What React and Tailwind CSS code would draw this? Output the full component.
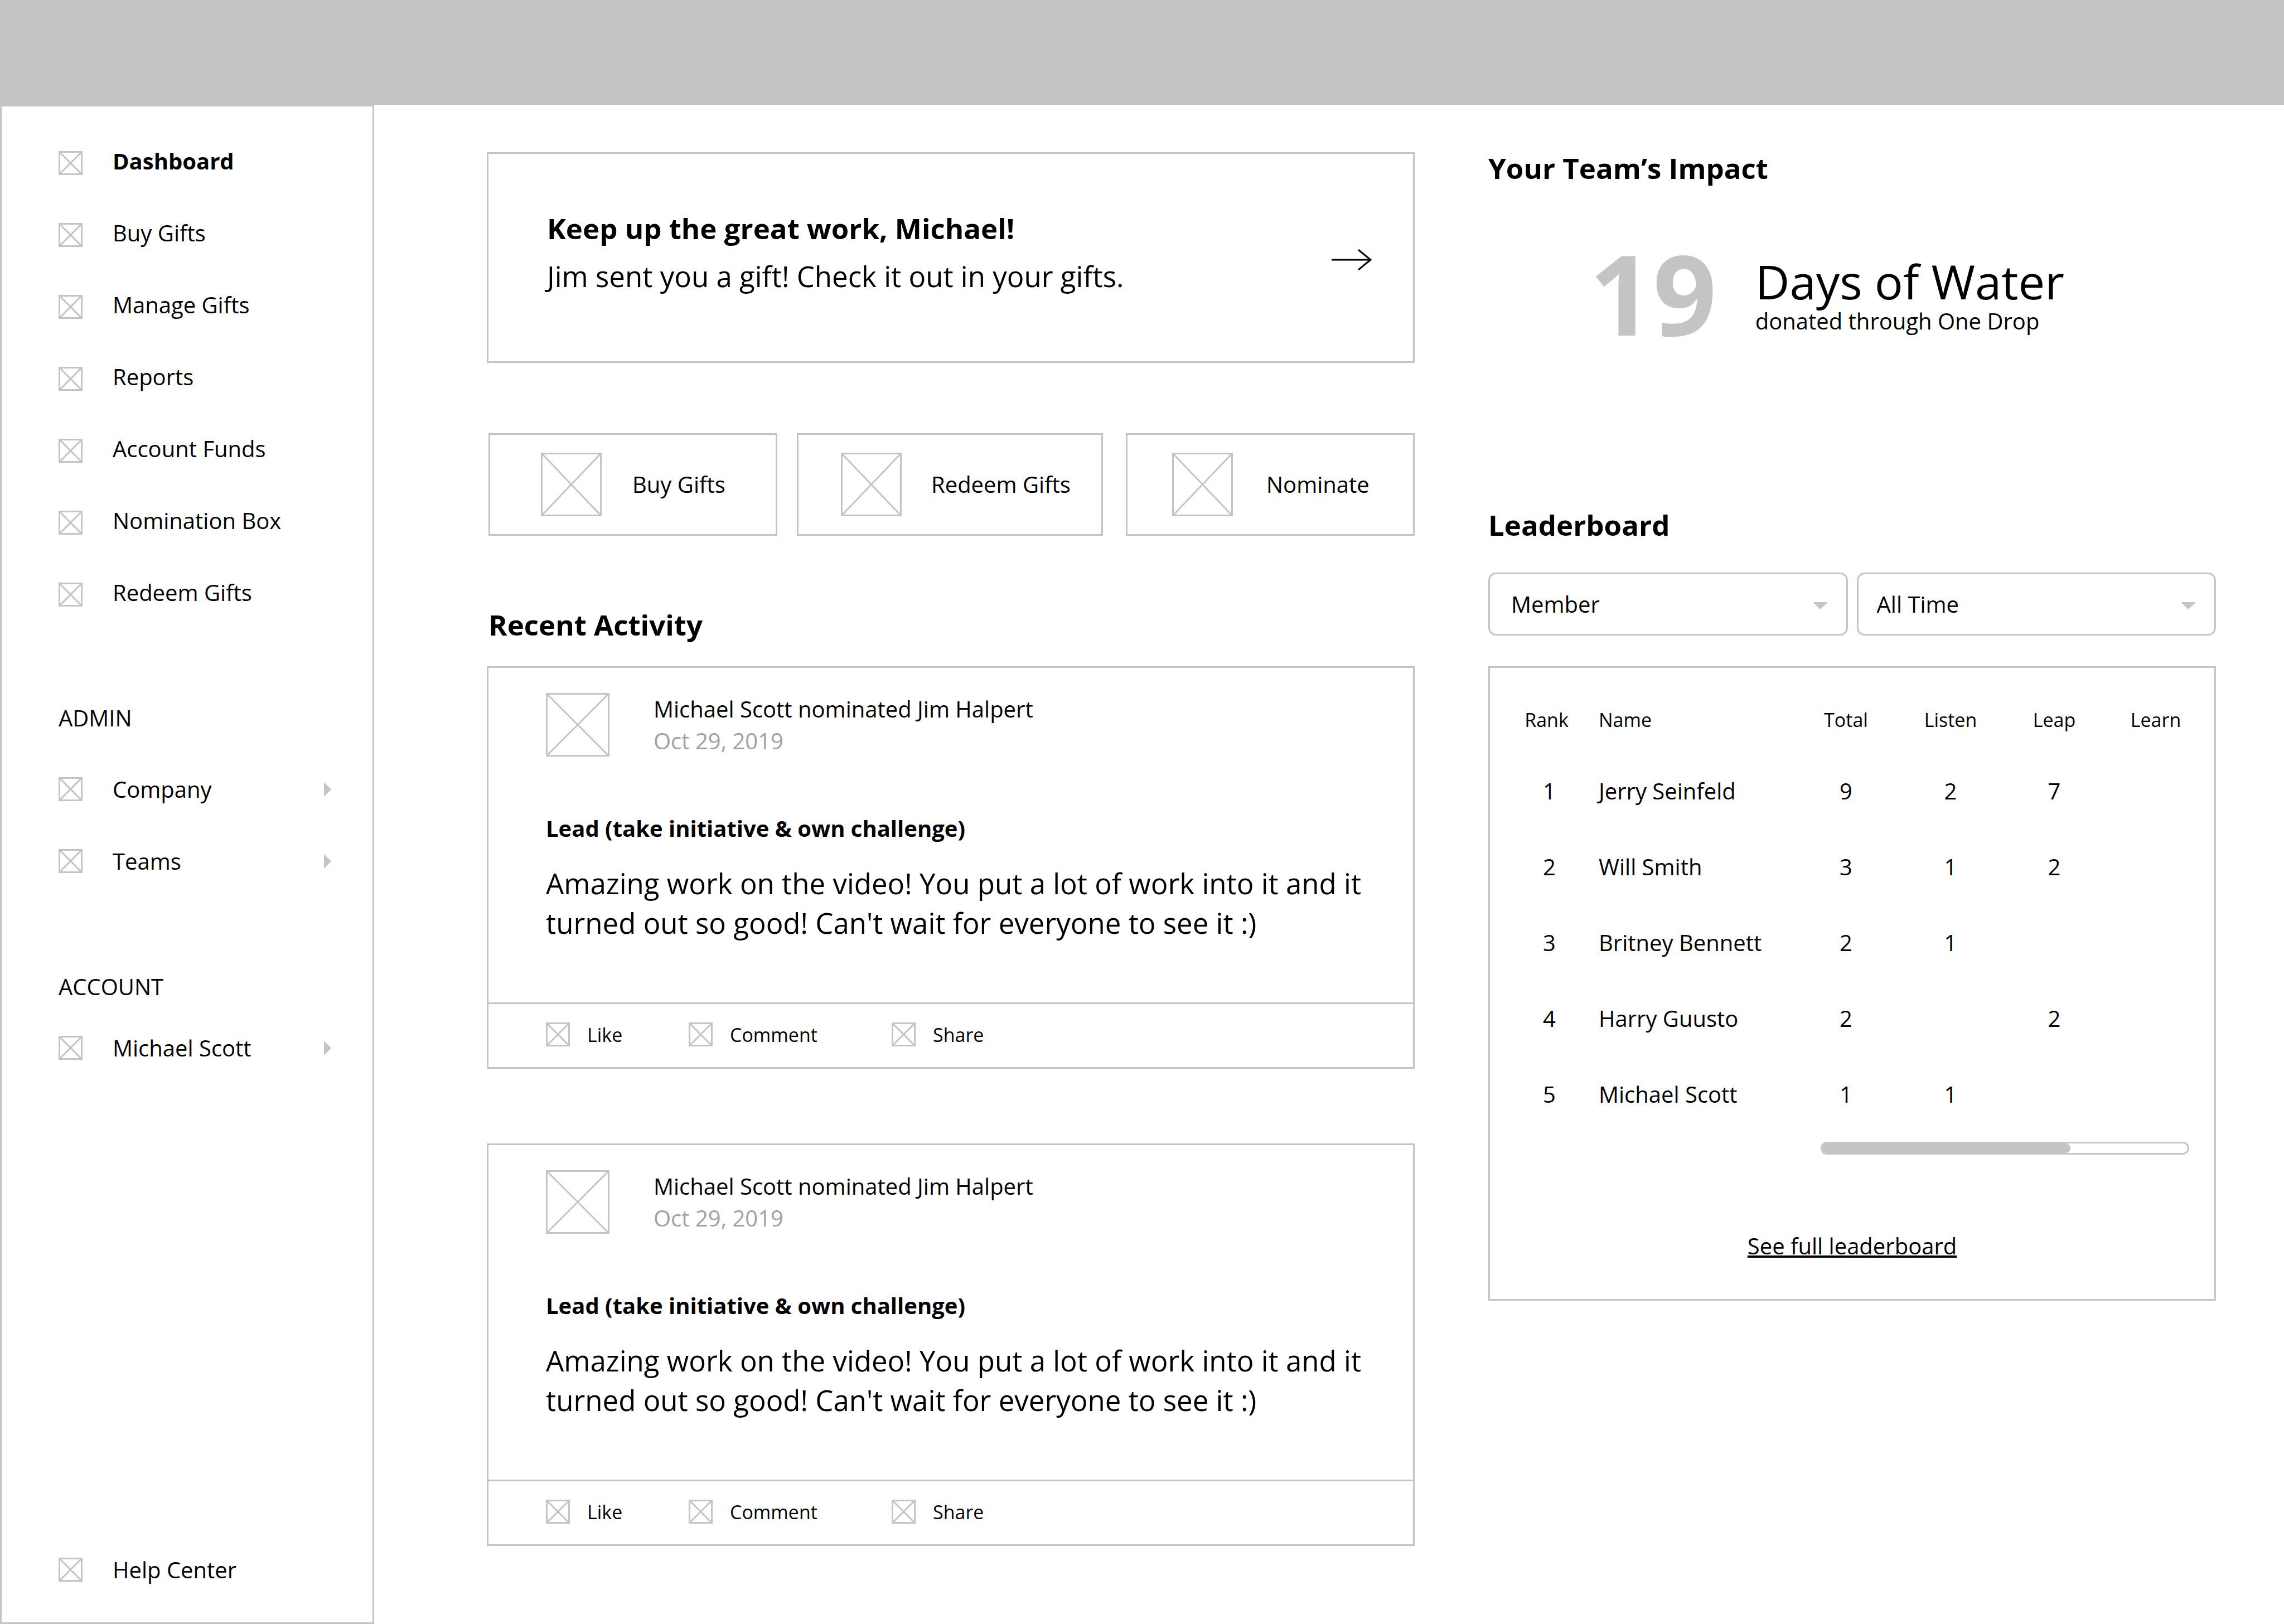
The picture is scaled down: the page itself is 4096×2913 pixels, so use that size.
const LINE = '#c4c4c4';

function Placeholder({ className, w, h }) {
  return (
    <svg className={className} viewBox={`0 0 ${w} ${h}`} fill="none" stroke={LINE} strokeWidth="3" aria-hidden="true">
      <rect x="1.5" y="1.5" width={w - 3} height={h - 3} />
      <path d={`M1 1L${w - 1} ${h - 1}M${w - 1} 1L1 ${h - 1}`} strokeWidth="3" />
    </svg>
  );
}

function NavItem({ label, bold, arrow, iconClass = '' }) {
  return (
    <li>
      <a href="#" className="flex h-[129px] items-center gap-[54px]">
        <span className={iconClass}>
          <Placeholder className="h-[43px] w-[43px]" w={43} h={43} />
        </span>
        <span className={bold ? 'font-bold' : ''}>{label}</span>
        {arrow && (
          <svg className="ml-auto h-[26px] w-[13px]" viewBox="0 0 13 26" fill={LINE} aria-hidden="true">
            <path d="M0 0L13 13L0 26Z" />
          </svg>
        )}
      </a>
    </li>
  );
}

const navItems = ['Dashboard', 'Buy Gifts', 'Manage Gifts', 'Reports', 'Account Funds', 'Nomination Box', 'Redeem Gifts'];

function Sidebar() {
  return (
    <aside className="flex w-[671px] shrink-0 flex-col border-3 border-[#c4c4c4] pt-[33px] pr-[74px] pb-[30px] pl-[102px]">
      <nav aria-label="Main">
        <ul>
          {navItems.map((label, i) => (
            <NavItem key={label} label={label} bold={i === 0} iconClass="mt-2" />
          ))}
        </ul>
        <h2 className="mt-[134px]">ADMIN</h2>
        <ul className="mt-9">
          <NavItem label="Company" arrow />
          <NavItem label="Teams" arrow />
        </ul>
        <h2 className="mt-[134px]">ACCOUNT</h2>
        <ul className="mt-[18px]">
          <NavItem label="Michael Scott" arrow />
        </ul>
      </nav>
      <ul className="mt-auto">
        <NavItem label="Help Center" />
      </ul>
    </aside>
  );
}

function Hero() {
  return (
    <a href="#" className="flex items-center justify-between border-3 border-[#c4c4c4] pt-2 pr-[74px] pl-[105px] text-[51px] leading-[71px]">
      <div className="pt-[90px] pb-[117px]">
        <p className="font-bold">Keep up the great work, Michael!</p>
        <p className="mt-[15px]">Jim sent you a gift! Check it out in your gifts.</p>
      </div>
      <svg className="h-[38px] w-[72px]" viewBox="0 0 72 38" fill="none" stroke="black" strokeWidth="3" aria-hidden="true">
        <path d="M0 19H70M48 1L70 19L48 37" />
      </svg>
    </a>
  );
}

function QuickAction({ label, className }) {
  return (
    <button type="button" className={`flex h-[184px] items-center border-3 border-[#c4c4c4] ${className}`}>
      <Placeholder className="h-[114px] w-[109px]" w={109} h={114} />
      <span>{label}</span>
    </button>
  );
}

function Activity() {
  return (
    <article className="border-3 border-[#c4c4c4]">
      <div className="px-[103px] pt-[45px] pb-[107px]">
        <header className="flex gap-[79px]">
          <Placeholder className="h-[114px] w-[114px]" w={114} h={114} />
          <div className="leading-[57px]">
            <p>Michael Scott nominated Jim Halpert</p>
            <p className="text-[#a1a1a1]">Oct 29, 2019</p>
          </div>
        </header>
        <h3 className="mt-[102px] font-bold">Lead (take initiative &amp; own challenge)</h3>
        <p className="mt-9 -mr-9 text-[51px] leading-[71px]">
          Amazing work on the video! You put a lot of work into it and it turned out so good! Can't wait for everyone to see it :)
        </p>
      </div>
      <footer className="grid h-[116px] grid-cols-[256px_364px_auto] items-center justify-start border-t-3 border-[#c4c4c4] px-[103px] pb-1 text-[34px] leading-[46px]">
        {['Like', 'Comment', 'Share'].map((label) => (
          <button key={label} type="button" className="flex items-center gap-[31px]">
            <Placeholder className="h-[43px] w-[43px]" w={43} h={43} />
            <span>{label}</span>
          </button>
        ))}
      </footer>
    </article>
  );
}

function Select({ label, value, className }) {
  return (
    <div className="relative flex-1">
      <select
        aria-label={label}
        defaultValue={value}
        className={`h-[113px] w-full appearance-none rounded-[14px] border-3 border-[#c4c4c4] bg-white pr-20 ${className}`}
      >
        <option>{value}</option>
      </select>
      <svg className="pointer-events-none absolute top-[53px] right-9 h-[13px] w-[27px]" viewBox="0 0 27 13" fill={LINE} aria-hidden="true">
        <path d="M0 0H27L13.5 13Z" />
      </svg>
    </div>
  );
}

const rows = [
  [1, 'Jerry Seinfeld', 9, 2, 7],
  [2, 'Will Smith', 3, 1, 2],
  [3, 'Britney Bennett', 2, 1, ''],
  [4, 'Harry Guusto', 2, '', 2],
  [5, 'Michael Scott', 1, 1, ''],
];

function Leaderboard() {
  return (
    <section>
      <h2 className="mt-[245px] text-[51px] leading-[71px] font-bold">Leaderboard</h2>
      <div className="mt-[50px] flex gap-4">
        <Select label="Group by" value="Member" className="pl-[38px]" />
        <Select label="Period" value="All Time" className="pl-[33px]" />
      </div>
      <div className="mt-[55px] flex flex-col border-3 border-[#c4c4c4] pt-8 pb-[68px]">
        <div className="pr-[14px]">
          <table className="w-full table-fixed text-center">
            <thead>
              <tr className="h-[121px] text-[34px] leading-[46px]">
                <th className="w-[195px] pl-2 font-normal">Rank</th>
                <th className="text-left font-normal">Name</th>
                <th className="w-[185px] font-normal">Total</th>
                <th className="w-[190px] font-normal">Listen</th>
                <th className="w-[182px] font-normal">Leap</th>
                <th className="w-[182px] font-normal">Learn</th>
              </tr>
            </thead>
            <tbody>
              {rows.map(([rank, name, total, listen, leap]) => (
                <tr key={rank} className="h-[136px]">
                  <td className="pl-[18px]">{rank}</td>
                  <td className="text-left">{name}</td>
                  <td>{total}</td>
                  <td>{listen}</td>
                  <td>{leap}</td>
                  <td />
                </tr>
              ))}
            </tbody>
          </table>
        </div>
        <div className="mt-[17px] mr-[45px] ml-[593px] h-[23px] overflow-hidden rounded-full border-3 border-[#c4c4c4]">
          <div className="h-full w-[68%] rounded-r-full bg-[#c4c4c4]" />
        </div>
        <a href="#" className="mt-[137px] self-center underline">See full leaderboard</a>
      </div>
    </section>
  );
}

export default function App() {
  return (
    <div className="flex min-h-screen flex-col bg-white font-['Open_Sans',sans-serif] text-[40px] leading-[54px] text-black">
      <header className="h-[188px] shrink-0 bg-[#c4c4c4]" />
      <div className="flex flex-1">
        <Sidebar />
        <main className="grid flex-1 grid-cols-[1664fr_1305fr] items-start gap-[132px] pr-[122px] pl-[202px]">
          <div className="min-w-0 pt-[85px]">
            <Hero />
            <div className="mt-[126px] grid grid-cols-[553fr_590fr_518fr] pl-[3px]">
              <QuickAction label="Buy Gifts" className="mr-[35px] gap-[55px] pl-[91px]" />
              <QuickAction label="Redeem Gifts" className="mr-[41px] gap-[53px] pl-[76px]" />
              <QuickAction label="Nominate" className="gap-[60px] pl-[80px]" />
            </div>
            <h2 className="mt-[124px] pl-[3px] text-[51px] leading-[71px] font-bold">Recent Activity</h2>
            <div className="mt-[39px] flex flex-col gap-[134px]">
              <Activity />
              <Activity />
            </div>
          </div>
          <div className="min-w-0 pt-[78px]">
            <section>
              <h2 className="text-[51px] leading-[71px] font-bold">Your Team’s Impact</h2>
              <div className="mt-[52px] flex items-start gap-[69px] pl-[181px]">
                <strong className="text-[200px] leading-[272px] font-bold text-[#c4c4c4]">19</strong>
                <div className="pt-[70px]">
                  <p className="text-[85px] leading-[90px]">Days of Water</p>
                  <p>donated through One Drop</p>
                </div>
              </div>
            </section>
            <Leaderboard />
          </div>
        </main>
      </div>
    </div>
  );
}
